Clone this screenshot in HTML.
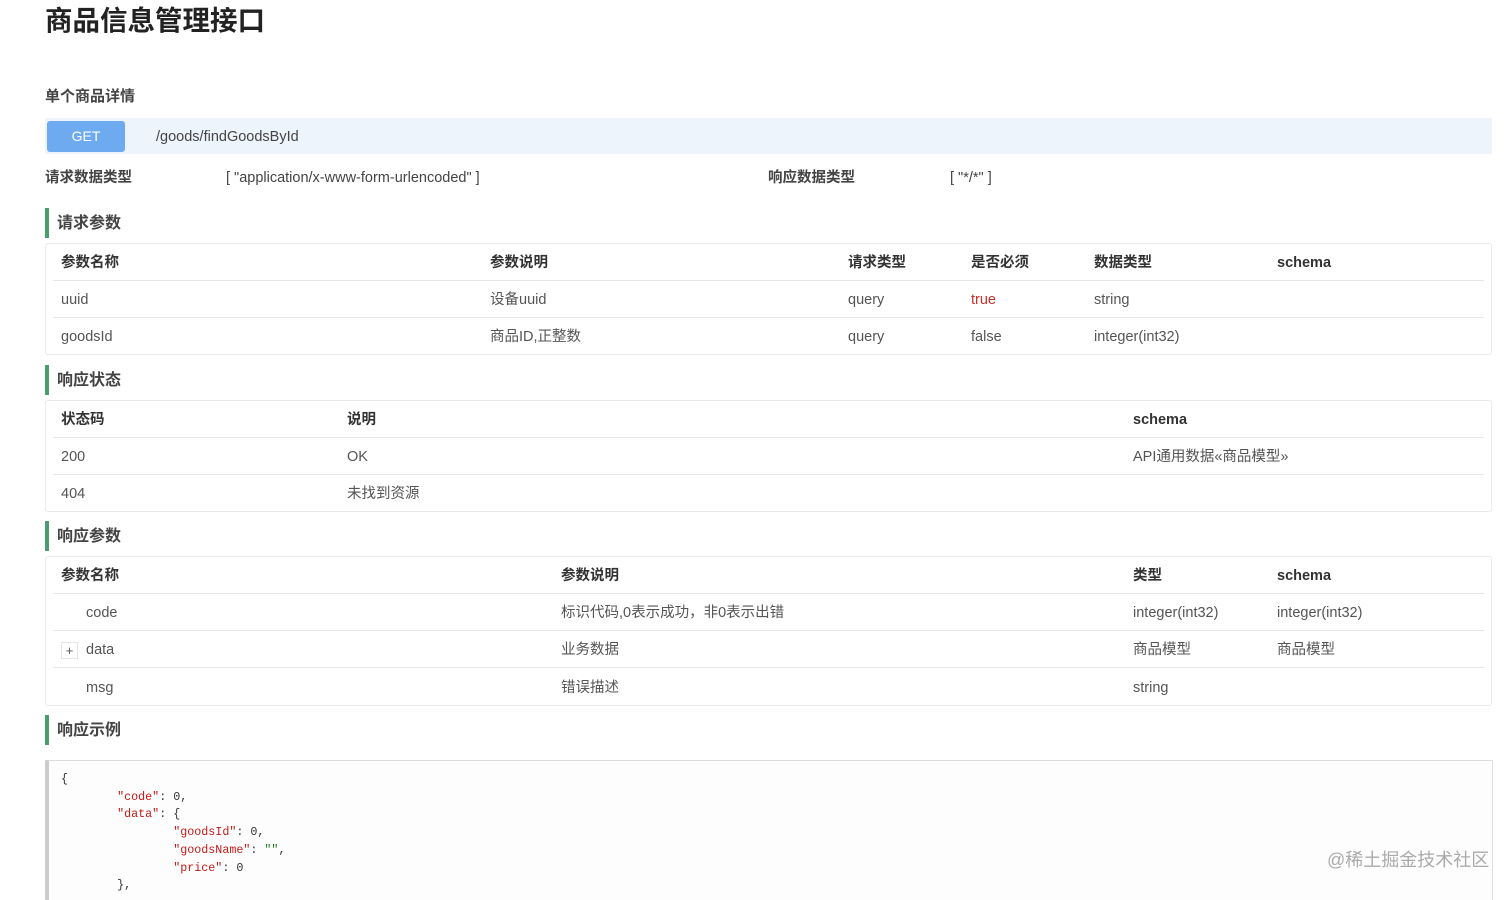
<!DOCTYPE html>
<html><head><meta charset="utf-8">
<style>
*{margin:0;padding:0;box-sizing:border-box}
body{width:1512px;height:895px;overflow:hidden;background:#fff;font-family:"Liberation Sans","Noto Sans CJK SC",sans-serif;color:#555;font-size:14.5px;position:relative}
.a{position:absolute;white-space:nowrap;line-height:20px}
.b{font-weight:bold;color:#333}
.h1{position:absolute;left:45px;top:3px;font-size:27.5px;font-weight:bold;color:#222;line-height:36px}
.bar{position:absolute;left:45px;width:4px;height:30px;background:#4a9e6e}
.sec{position:absolute;left:57px;font-size:16px;font-weight:bold;color:#444;line-height:22px}
.box{position:absolute;left:45px;width:1447px;border:1px solid #eaeaea;border-radius:3px;background:#fff}
.ln{position:absolute;left:53px;width:1431px;height:1px;background:#e8e8e8}
.mono{font-family:"Liberation Mono","DejaVu Sans Mono",monospace;font-size:11.7px;color:#333}
.r{color:#c41a16}
</style></head><body>
<div class="h1">商品信息管理接口</div>
<div class="a b" style="left:45px;top:87px;font-size:15px;color:#444">单个商品详情</div>
<div style="position:absolute;left:45px;top:118px;width:1447px;height:36px;background:#edf4fc"></div>
<div style="position:absolute;left:47px;top:121px;width:78px;height:31px;background:#6eaaf0;border-radius:3px;color:#fff;text-align:center;line-height:31px;font-size:14px">GET</div>
<div class="a" style="left:156px;top:127px;color:#444">/goods/findGoodsById</div>
<div class="a b" style="left:45px;top:168px;color:#444">请求数据类型</div>
<div class="a" style="left:226px;top:168px;color:#444">[ "application/x-www-form-urlencoded" ]</div>
<div class="a b" style="left:768px;top:168px;color:#444">响应数据类型</div>
<div class="a" style="left:950px;top:168px;color:#444">[ "*/*" ]</div>

<div class="bar" style="top:208px"></div><div class="sec" style="top:213px">请求参数</div>
<div class="box" style="top:243px;height:112px"></div>
<div class="ln" style="top:280px"></div><div class="ln" style="top:317px"></div>
<div class="a b" style="left:61px;top:253px">参数名称</div>
<div class="a b" style="left:490px;top:253px">参数说明</div>
<div class="a b" style="left:848px;top:253px">请求类型</div>
<div class="a b" style="left:971px;top:253px">是否必须</div>
<div class="a b" style="left:1094px;top:253px">数据类型</div>
<div class="a b" style="left:1277px;top:253px">schema</div>
<div class="a" style="left:61px;top:290px">uuid</div>
<div class="a" style="left:490px;top:290px">设备uuid</div>
<div class="a" style="left:848px;top:290px">query</div>
<div class="a" style="left:971px;top:290px;color:#c9302c">true</div>
<div class="a" style="left:1094px;top:290px">string</div>
<div class="a" style="left:61px;top:327px">goodsId</div>
<div class="a" style="left:490px;top:327px">商品ID,正整数</div>
<div class="a" style="left:848px;top:327px">query</div>
<div class="a" style="left:971px;top:327px">false</div>
<div class="a" style="left:1094px;top:327px">integer(int32)</div>

<div class="bar" style="top:365px"></div><div class="sec" style="top:370px">响应状态</div>
<div class="box" style="top:400px;height:112px"></div>
<div class="ln" style="top:437px"></div><div class="ln" style="top:474px"></div>
<div class="a b" style="left:61px;top:410px">状态码</div>
<div class="a b" style="left:347px;top:410px">说明</div>
<div class="a b" style="left:1133px;top:410px">schema</div>
<div class="a" style="left:61px;top:447px">200</div>
<div class="a" style="left:347px;top:447px">OK</div>
<div class="a" style="left:1133px;top:447px">API通用数据«商品模型»</div>
<div class="a" style="left:61px;top:484px">404</div>
<div class="a" style="left:347px;top:484px">未找到资源</div>

<div class="bar" style="top:521px"></div><div class="sec" style="top:526px">响应参数</div>
<div class="box" style="top:556px;height:150px"></div>
<div class="ln" style="top:593px"></div><div class="ln" style="top:630px"></div><div class="ln" style="top:667px"></div>
<div class="a b" style="left:61px;top:566px">参数名称</div>
<div class="a b" style="left:561px;top:566px">参数说明</div>
<div class="a b" style="left:1133px;top:566px">类型</div>
<div class="a b" style="left:1277px;top:566px">schema</div>
<div class="a" style="left:86px;top:603px">code</div>
<div class="a" style="left:561px;top:603px">标识代码,0表示成功，非0表示出错</div>
<div class="a" style="left:1133px;top:603px">integer(int32)</div>
<div class="a" style="left:1277px;top:603px">integer(int32)</div>
<div style="position:absolute;left:61px;top:642px;width:17px;height:17px;border:1px solid #e5e5e5;text-align:center;line-height:15px;font-size:13px;color:#555">+</div>
<div class="a" style="left:86px;top:640px">data</div>
<div class="a" style="left:561px;top:640px">业务数据</div>
<div class="a" style="left:1133px;top:640px">商品模型</div>
<div class="a" style="left:1277px;top:640px">商品模型</div>
<div class="a" style="left:86px;top:678px">msg</div>
<div class="a" style="left:561px;top:678px">错误描述</div>
<div class="a" style="left:1133px;top:678px">string</div>

<div class="bar" style="top:715px"></div><div class="sec" style="top:720px">响应示例</div>
<div style="position:absolute;left:45px;top:760px;width:1448px;height:140px;background:#fdfdfd;border-top:1px solid #ddd;border-left:4px solid #ccc;border-right:1px solid #ddd"></div>
<div class="a mono" style="left:61px;top:771px;line-height:17.7px;white-space:pre">{
        <span class="r">"code"</span>: 0,
        <span class="r">"data"</span>: {
                <span class="r">"goodsId"</span>: 0,
                <span class="r">"goodsName"</span>: <span style="color:#1a7a1a">""</span>,
                <span class="r">"price"</span>: 0
        },</div>
<div class="a" style="left:1327px;top:850px;font-size:18px;color:#aaa">@稀土掘金技术社区</div>
</body></html>
